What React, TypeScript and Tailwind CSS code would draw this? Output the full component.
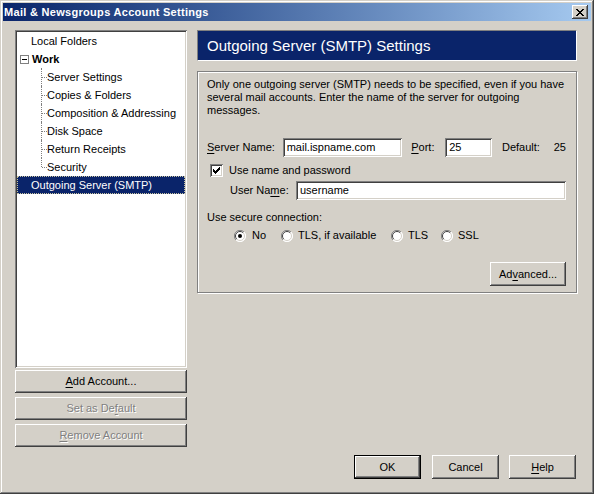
import React from "react";

const raised =
  "shadow-[inset_-1px_-1px_0_#404040,inset_1px_1px_0_#ffffff,inset_-2px_-2px_0_#808080,inset_2px_2px_0_#d4d0c8]";
const sunken =
  "shadow-[inset_1px_1px_0_#808080,inset_-1px_-1px_0_#ffffff,inset_2px_2px_0_#404040,inset_-2px_-2px_0_#d4d0c8]";

const U = ({ children }: { children: React.ReactNode }) => <span className="underline underline-offset-2">{children}</span>;

function Btn({
  children,
  className = "",
  disabled = false,
  isDefault = false,
}: {
  children: React.ReactNode;
  className?: string;
  disabled?: boolean;
  isDefault?: boolean;
}) {
  return (
    <button
      className={`flex items-center justify-center bg-[#d4d0c8] ${raised} ${
        isDefault ? "outline outline-1 outline-black" : ""
      } ${disabled ? "text-[#808080] [text-shadow:1px_1px_0_#ffffff]" : "text-black"} ${className}`}
    >
      {children}
    </button>
  );
}

function Field({ value, className = "" }: { value: string; className?: string }) {
  return (
    <div className={`h-[19px] bg-white ${sunken} flex items-center pl-[4px] text-black ${className}`}>{value}</div>
  );
}

function Radio({ checked = false }: { checked?: boolean }) {
  return (
    <svg width="12" height="12" viewBox="0 0 12 12" className="shrink-0">
      <circle cx="6" cy="6" r="5.5" fill="#ffffff" />
      <path d="M10 2 A5.5 5.5 0 0 0 2 10" stroke="#808080" strokeWidth="1" fill="none" />
      <path d="M9.2 2.8 A4.5 4.5 0 0 0 2.8 9.2" stroke="#404040" strokeWidth="1" fill="none" />
      <path d="M2 10 A5.5 5.5 0 0 0 10 2" stroke="#ffffff" strokeWidth="1" fill="none" />
      <path d="M2.8 9.2 A4.5 4.5 0 0 0 9.2 2.8" stroke="#d4d0c8" strokeWidth="1" fill="none" />
      {checked && <circle cx="6" cy="6" r="2" fill="#000000" />}
    </svg>
  );
}

const children = [
  "Server Settings",
  "Copies & Folders",
  "Composition & Addressing",
  "Disk Space",
  "Return Receipts",
  "Security",
];

function Tree() {
  return (
    <div className={`h-[338px] bg-white ${sunken} p-[2px] text-black`}>
      <div className="h-[18px] flex items-center pl-[14px]">Local Folders</div>
      <div className="h-[18px] flex items-center pl-[3px]">
        <div className="w-[9px] h-[9px] border border-[#808080] bg-white flex items-center justify-center">
          <div className="w-[5px] h-[1px] bg-black" />
        </div>
        <span className="ml-[3px] font-bold">Work</span>
      </div>
      {children.map((c, i) => (
        <div key={c} className="relative h-[18px] flex items-center pl-[30px]">
          <span
            className={`absolute left-[24px] top-0 w-0 border-l border-dotted border-[#808080] ${
              i === children.length - 1 ? "h-[9px]" : "h-[18px]"
            }`}
          />
          <span className="absolute left-[25px] top-[9px] w-[5px] h-0 border-t border-dotted border-[#808080]" />
          {c}
        </div>
      ))}
      <div className="h-[18px] flex items-center pl-[14px] bg-[#0a246a] text-white outline outline-1 outline-dotted outline-[#c8c4a0] -outline-offset-1">
        Outgoing Server (SMTP)
      </div>
    </div>
  );
}

export default function App() {
  return (
    <div
      className={`w-[594px] h-[494px] bg-[#d4d0c8] p-[3px] flex flex-col text-[11px] leading-[13px] font-['Liberation_Sans',Arial,sans-serif] shadow-[inset_-1px_-1px_0_#404040,inset_1px_1px_0_#d4d0c8,inset_-2px_-2px_0_#808080,inset_2px_2px_0_#ffffff]`}
    >
      {/* title bar */}
      <div className="h-[18px] flex items-center bg-gradient-to-r from-[#0a246a] to-[#a6caf0] pl-[1px] pr-[3px]">
        <span className="text-white font-bold text-[11px] tracking-[0.3px]">Mail &amp; Newsgroups Account Settings</span>
        <div className={`ml-auto w-[16px] h-[14px] bg-[#d4d0c8] ${raised} flex items-center justify-center`}>
          <svg width="8" height="7" viewBox="0 0 8 7" shapeRendering="crispEdges">
            <path d="M0 0h2v1h-2zM6 0h2v1h-2zM1 1h2v1h-2zM5 1h2v1h-2zM2 2h4v1h-4zM3 3h2v1h-2zM2 4h4v1h-4zM1 5h2v1h-2zM5 5h2v1h-2zM0 6h2v1h-2zM6 6h2v1h-2z" fill="#000" />
          </svg>
        </div>
      </div>

      <div className="flex-1 flex flex-col pl-[12px] pt-[9px]">
        <div className="flex h-[417px]">
          {/* left column */}
          <div className="w-[172px] flex flex-col">
            <Tree />
            <Btn className="mt-[2px] h-[23px]">
              <U>A</U>dd Account...
            </Btn>
            <Btn className="mt-[4px] h-[23px]" disabled>
              Set as De<U>f</U>ault
            </Btn>
            <Btn className="mt-[4px] h-[23px]" disabled>
              <U>R</U>emove Account
            </Btn>
          </div>

          {/* right column */}
          <div className="ml-[10px] w-[380px] flex flex-col">
            <div className="h-[31px] bg-[#0a246a] border border-t-[#808080] border-l-[#808080] border-r-white border-b-white flex items-center pl-[9px]">
              <span className="text-white text-[15px] leading-[18px]">Outgoing Server (SMTP) Settings</span>
            </div>

            <div className="mt-[10px] h-[222px] border border-[#808080] shadow-[1px_1px_0_#ffffff,inset_1px_1px_0_#ffffff] pl-[9px] pr-[10px] pt-[6px] text-black">
              <p>
                Only one outgoing server (SMTP) needs to be specified, even if you have
                <br />
                several mail accounts. Enter the name of the server for outgoing
                <br />
                messages.
              </p>

              <div className="mt-[21px] flex items-center">
                <span className="w-[76px]">
                  <U>S</U>erver Name:
                </span>
                <Field value="mail.ispname.com" className="w-[120px]" />
                <span className="ml-[9px] w-[34px]">
                  <U>P</U>ort:
                </span>
                <Field value="25" className="w-[47px]" />
                <span className="ml-[10px] w-[52px]">Default:</span>
                <span>25</span>
              </div>

              <div className="mt-[6px] h-[14px] flex items-center">
                <div className={`ml-[3px] w-[13px] h-[13px] bg-white ${sunken} flex items-center justify-center`}>
                  <svg width="7" height="7" viewBox="0 0 7 7" shapeRendering="crispEdges">
                    <path d="M6 0h1v3h-1zM5 1h1v3h-1zM4 2h1v3h-1zM3 3h1v3h-1zM2 4h1v3h-1zM1 3h1v3h-1zM0 2h1v3h-1z" fill="#000" />
                  </svg>
                </div>
                <span className="ml-[6px]">Use name and password</span>
              </div>

              <div className="mt-[4px] flex items-center pl-[23px]">
                <span className="w-[66px]">
                  User Na<U>m</U>e:
                </span>
                <Field value="username" className="flex-1" />
              </div>

              <div className="mt-[11px]">Use secure connection:</div>

              <div className="mt-[5px] h-[13px] flex items-center pl-[27px]">
                <div className="w-[47px] flex items-center">
                  <Radio checked />
                  <span className="ml-[6px]">No</span>
                </div>
                <div className="w-[110px] flex items-center">
                  <Radio />
                  <span className="ml-[5px]">TLS, if available</span>
                </div>
                <div className="w-[50px] flex items-center">
                  <Radio />
                  <span className="ml-[5px]">TLS</span>
                </div>
                <div className="flex items-center">
                  <Radio />
                  <span className="ml-[5px]">SSL</span>
                </div>
              </div>

              <div className="mt-[20px] flex justify-end">
                <Btn className="w-[76px] h-[24px]">
                  Ad<U>v</U>anced...
                </Btn>
              </div>
            </div>
          </div>
        </div>

        {/* dialog buttons */}
        <div className="mt-[8px] flex justify-end pr-[15px]">
          <Btn isDefault className="w-[65px] h-[22px] mr-[12px] mt-[1px]">
            OK
          </Btn>
          <Btn className="w-[67px] h-[24px]">Cancel</Btn>
          <Btn className="ml-[10px] w-[67px] h-[24px]">
            <U>H</U>elp
          </Btn>
        </div>
      </div>
    </div>
  );
}
